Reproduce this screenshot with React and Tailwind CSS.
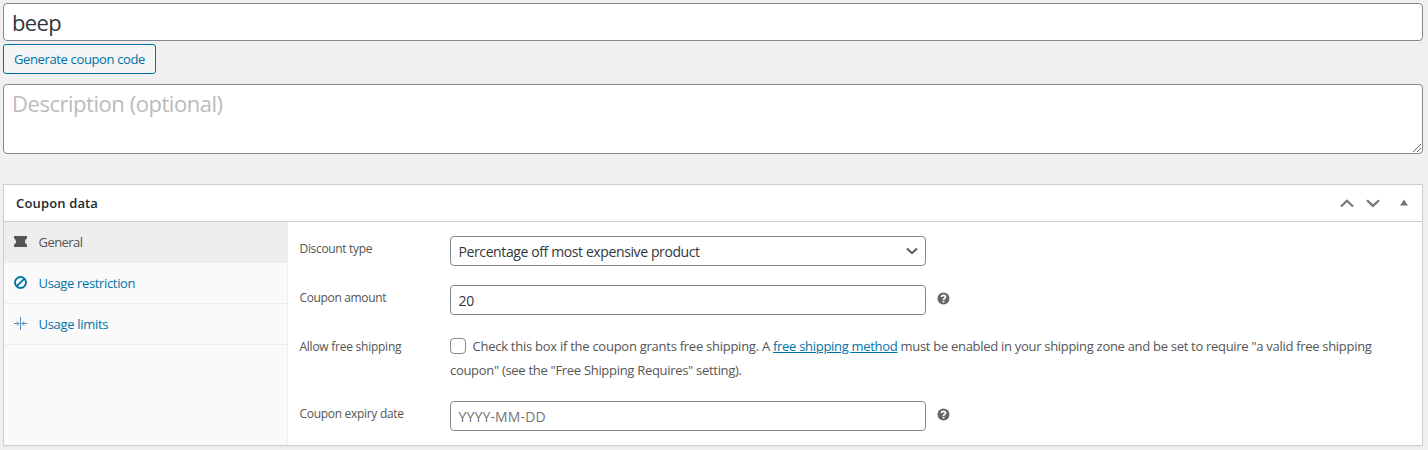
import React from 'react';

const field = 'flex items-center rounded-[4px] border border-[#7e8993] bg-white px-[7.5px] text-[14px] text-[#32373c]';

function Help() {
  return (
    <svg className="ml-[11px] h-[13px] w-[13px] shrink-0" viewBox="0 0 13 13">
      <circle cx="6.5" cy="6.5" r="6" fill="#666" />
      <path d="M4.5 5.1C4.5 2.7 8.5 2.8 8.5 5 8.5 6.4 6.5 6.3 6.5 7.9" fill="none" stroke="#fff" strokeWidth="1.7" />
      <rect x="5.6" y="8.8" width="1.8" height="1.6" fill="#fff" />
    </svg>
  );
}

function Tab({ icon, active, children }) {
  return (
    <div className={`flex h-[41px] items-center border-b border-[#eee] pl-[9px] text-[13px] ${active ? 'bg-[#eee] text-[#555]' : 'text-[#0073aa]'}`}>
      <span className="mr-[11.5px] flex w-[14px] justify-center">{icon}</span>
      <span className="pt-[2px]">{children}</span>
    </div>
  );
}

function Row({ label, className, children }) {
  return (
    <div className={`flex items-start ${className}`}>
      <div className="w-[150px] shrink-0 pt-[1px] text-[12px] leading-6">{label}</div>
      {children}
    </div>
  );
}

export default function App() {
  return (
    <div className="h-[450px] overflow-hidden bg-[#f0f0f0] pt-[3px] pl-[3px] pr-[5px] font-['Open_Sans','Noto_Sans',sans-serif] text-[13px] text-[#555]">
      <div className="flex h-[38px] items-center rounded-[4px] border border-[#7e8993] bg-white px-2 text-[22px] text-[#32373c]">
        <span className="tracking-[-0.6px]">beep</span>
      </div>
      <div className="mt-[3px] flex h-[30px] w-[153px] items-center justify-center rounded-[3px] border border-[#0071a1] bg-[#f3f5f6] pt-[2px] text-[13px] whitespace-nowrap text-[#0071a1]">
        <span className="tracking-[-0.36px]">Generate coupon code</span>
      </div>
      <div className="relative mt-[10px] h-[70px] rounded-[4px] border border-[#7e8993] bg-white px-2 pt-[3px] text-[22px] leading-[31px] text-[#bbb]">
        <span className="tracking-[-0.46px]">Description (optional)</span>
        <svg className="absolute right-0 bottom-0 h-[10px] w-[10px]" viewBox="0 0 10 10">
          <path d="M1 9L9 1M5 9L9 5" stroke="#666" fill="none" />
        </svg>
      </div>

      <div className="mt-[30px] h-[262px] border border-[#ccd0d4] bg-white shadow-[0_1px_1px_rgba(0,0,0,0.04)]">
        <div className="flex h-[37px] items-center border-b border-[#ccd0d4] pl-3 text-[#23282d]">
          <span className="pt-[2px] text-[13px] font-semibold tracking-[0.15px]">Coupon data</span>
          <div className="ml-auto flex items-center pr-[13px]">
            <svg className="mr-px h-[9px] w-[14px]" viewBox="0 0 14 9"><path d="M1 7.5L7 1.8L13 7.5" fill="none" stroke="#72777c" strokeWidth="2.2" /></svg>
            <svg className="ml-[11px] h-[9px] w-[14px]" viewBox="0 0 14 9"><path d="M1 1.2L7 6.9L13 1.2" fill="none" stroke="#72777c" strokeWidth="2.2" /></svg>
            <svg className="mr-px mb-[1px] ml-[20px] h-[7px] w-[8px]" viewBox="0 0 8 7"><path d="M0 6.5L4 0.5L8 6.5Z" fill="#72777c" /></svg>
          </div>
        </div>
        <div className="flex h-[223px]">
          <div className="w-[284px] shrink-0 border-r border-[#eee] bg-[#fafafa]">
            <Tab active icon={<svg className="mb-[2px] h-[11px] w-[13px]" viewBox="0 0 13 11"><path d="M0 0H13V2.5C11.8 3 11 4 11 5.5S11.8 8 13 8.5V11H0V8.5C1.2 8 2 7 2 5.5S1.2 3 0 2.5Z" fill="#555" /></svg>}>
              <span className="tracking-[-0.55px]">General</span>
            </Tab>
            <Tab icon={<svg className="mb-[2px] h-[13px] w-[13px]" viewBox="0 0 13 13"><circle cx="6.5" cy="6.5" r="5.5" fill="none" stroke="#0073aa" strokeWidth="1.9" /><path d="M2.8 10.2L10.2 2.8" stroke="#0073aa" strokeWidth="1.9" /></svg>}>
              <span className="tracking-[-0.35px]">Usage restriction</span>
            </Tab>
            <Tab icon={<svg className="mb-[2px] h-[13px] w-[13px]" viewBox="0 0 13 13"><path d="M6.5 0V13M0 6.5H5M13 6.5H8M2.8 4.3L5 6.5L2.8 8.7M10.2 4.3L8 6.5L10.2 8.7" fill="none" stroke="#5588b8" strokeWidth="1" /></svg>}>
              <span className="tracking-[-0.3px]">Usage limits</span>
            </Tab>
          </div>
          <div className="grow pt-[14px] pl-[12px]">
            <Row className="h-[49px]" label={<span className="ml-[-0.5px] tracking-[-0.33px]">Discount type</span>}>
              <div className={`${field} h-[30px] w-[476px] justify-between`}>
                <span className="tracking-[-0.39px]">Percentage off most expensive product</span>
                <svg className="h-[8px] w-[12px]" viewBox="0 0 12 8"><path d="M1 1.5L6 6.3L11 1.5" fill="none" stroke="#555" strokeWidth="1.9" /></svg>
              </div>
            </Row>
            <Row className="h-[49px]" label={<span className="ml-[-0.5px] tracking-[-0.35px]">Coupon amount</span>}>
              <div className="flex items-center"><div className={`${field} h-[30px] w-[476px]`}><span className="tracking-[-0.2px]">20</span></div><div className="mb-[3px]"><Help /></div></div>
            </Row>
            <Row className="h-[67px]" label={<span className="ml-[-0.5px] tracking-[-0.25px]">Allow free shipping</span>}>
              <div className="text-[13px] leading-6 whitespace-nowrap">
                <div className="flex items-center">
                  <span className="mr-[6.5px] h-4 w-4 rounded-[4px] border border-[#7e8993] bg-white" />
                  <span className="tracking-[-0.298px]"><span className="tracking-[-0.26px]">Check this box if the coupon grants free shipping. A </span><span className="text-[#0073aa] underline">free shipping method</span> must be enabled in your shipping zone and be set to require "a valid free shipping</span>
                </div>
                <div><span className="tracking-[-0.3px]">coupon" (see the "Free Shipping Requires" setting).</span></div>
              </div>
            </Row>
            <Row className="h-[30px]" label={<span className="ml-[-0.5px] tracking-[-0.3px]">Coupon expiry date</span>}>
              <div className="flex items-center"><div className={`${field} h-[30px] w-[476px]`}><span className="tracking-[0.15px] text-[#757575]">YYYY-MM-DD</span></div><div className="mb-[3px]"><Help /></div></div>
            </Row>
          </div>
        </div>
      </div>
    </div>
  );
}
